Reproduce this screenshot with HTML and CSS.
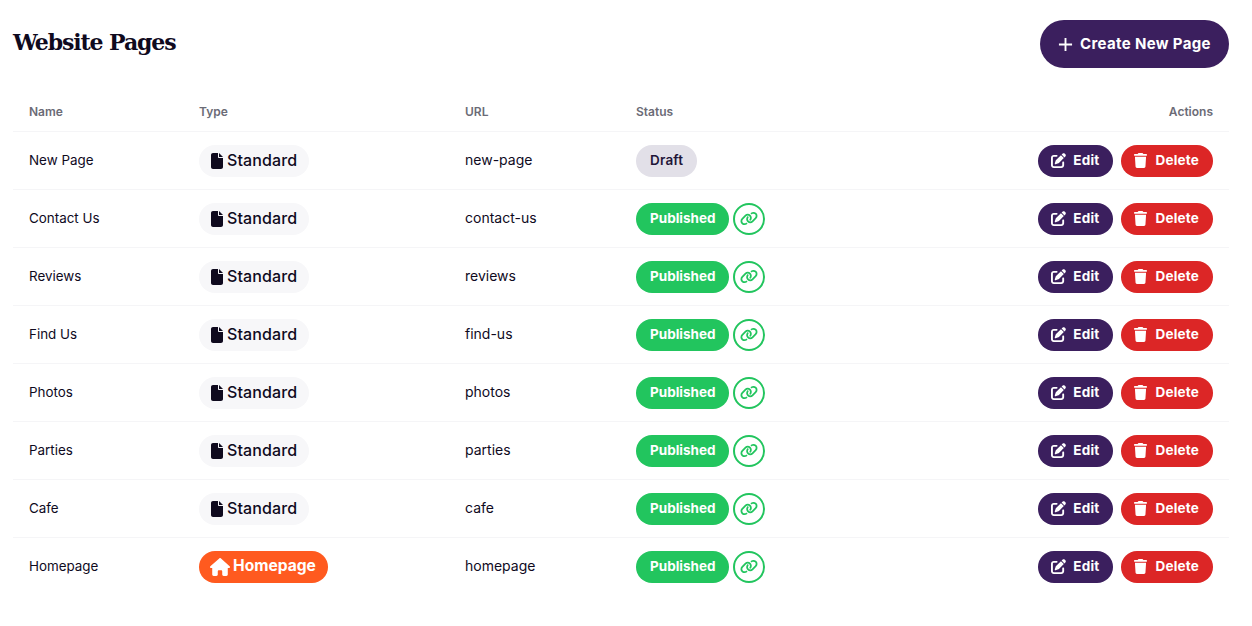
FILE: index.html
```html
<!DOCTYPE html>
<html lang="en">

<head>
    <meta charset="UTF-8">
    <meta name="viewport" content="width=device-width, initial-scale=1.0">
    <title>Website Pages</title>
    <link rel="stylesheet" href="styles.css">
</head>

<body>
    <svg class="sprite" xmlns="http://www.w3.org/2000/svg">
        <symbol id="i-file" viewBox="0 0 384 512"><path d="M0 64C0 28.7 28.7 0 64 0H224V128c0 17.7 14.3 32 32 32H384V448c0 35.3-28.7 64-64 64H64c-35.3 0-64-28.7-64-64V64zm384 64H256V0L384 128z"/></symbol>
        <symbol id="i-house" viewBox="0 0 576 512"><path d="M575.8 255.5c0 18-15 32.1-32 32.1h-32l.7 160.2c0 2.7-.2 5.4-.5 8.1V472c0 22.1-17.9 40-40 40H456c-1.1 0-2.2 0-3.3-.1c-1.4 .1-2.8 .1-4.2 .1H416 392c-22.1 0-40-17.9-40-40V448 384c0-17.7-14.3-32-32-32H256c-17.7 0-32 14.3-32 32v64 24c0 22.1-17.9 40-40 40H160 128.1c-1.5 0-3-.1-4.5-.2c-1.2 .1-2.4 .2-3.6 .2H104c-22.1 0-40-17.9-40-40V360c0-.9 0-1.9 .1-2.8V287.6H32c-18 0-32-14-32-32.1c0-9 3-17 10-24L266.4 8c7-7 15-8 22-8s15 2 21 7L564.8 231.5c8 7 12 15 11 24z"/></symbol>
        <symbol id="i-trash" viewBox="0 0 448 512"><path d="M135.2 17.7L128 32H32C14.3 32 0 46.3 0 64S14.3 96 32 96H416c17.7 0 32-14.3 32-32s-14.3-32-32-32H320l-7.2-14.3C307.4 6.8 296.3 0 284.2 0H163.8c-12.1 0-23.2 6.8-28.6 17.7zM416 128H32L53.2 467c1.6 25.3 22.6 45 47.9 45H346.9c25.3 0 46.3-19.7 47.9-45L416 128z"/></symbol>
        <symbol id="i-edit" viewBox="0 0 512 512"><path d="M471.6 21.7c-21.9-21.9-57.3-21.9-79.2 0L362.3 51.7l97.9 97.9 30.1-30.1c21.9-21.9 21.9-57.3 0-79.2L471.6 21.7zm-299.2 220c-6.1 6.1-10.8 13.6-13.5 21.9l-29.6 88.8c-2.9 8.6-.6 18.1 5.8 24.6s15.9 8.7 24.6 5.8l88.8-29.6c8.2-2.7 15.7-7.4 21.9-13.5L437.7 172.3 339.7 74.3 172.4 241.7zM96 64C43 64 0 107 0 160V416c0 53 43 96 96 96H352c53 0 96-43 96-96V320c0-17.7-14.3-32-32-32s-32 14.3-32 32v96c0 17.7-14.3 32-32 32H96c-17.7 0-32-14.3-32-32V160c0-17.7 14.3-32 32-32h96c17.7 0 32-14.3 32-32s-14.3-32-32-32H96z"/></symbol>
        <symbol id="i-link" viewBox="0 0 640 512"><path d="M579.8 267.7c56.5-56.5 56.5-148 0-204.5c-50-50-128.8-56.5-186.3-15.4l-1.6 1.1c-14.4 10.3-17.7 30.3-7.4 44.6s30.3 17.7 44.6 7.4l1.6-1.1c32.1-22.9 76-19.3 103.8 8.6c31.5 31.5 31.5 82.5 0 114L422.3 334.8c-31.5 31.5-82.5 31.5-114 0c-27.9-27.9-31.5-71.8-8.6-103.8l1.1-1.6c10.3-14.4 6.9-34.4-7.4-44.6s-34.4-6.9-44.6 7.4l-1.1 1.6C206.5 251.2 213 330 263 380c56.5 56.5 148 56.5 204.5 0L579.8 267.7zM60.2 244.3c-56.5 56.5-56.5 148 0 204.5c50 50 128.8 56.5 186.3 15.4l1.6-1.1c14.4-10.3 17.7-30.3 7.4-44.6s-30.3-17.7-44.6-7.4l-1.6 1.1c-32.1 22.9-76 19.3-103.8-8.6C74 372 74 321 105.5 289.5L217.7 177.2c31.5-31.5 82.5-31.5 114 0c27.9 27.9 31.5 71.8 8.6 103.9l-1.1 1.6c-10.3 14.4-6.9 34.4 7.4 44.6s34.4 6.9 44.6-7.4l1.1-1.6C433.5 260.8 427 182 377 132c-56.5-56.5-148-56.5-204.5 0L60.2 244.3z"/></symbol>
    </svg>

    <div class="main">
        <div class="header">
            <h1 class="title">Website Pages</h1>
            <a class="btn-create" href="#">
                <svg class="plus" viewBox="0 0 16 16"><path d="M8 1v14M1 8h14"/></svg>
                <span>Create New Page</span>
            </a>
        </div>

        <table class="pages">
            <thead>
                <tr>
                    <th class="col-name">Name</th>
                    <th class="col-type">Type</th>
                    <th class="col-url">URL</th>
                    <th class="col-status">Status</th>
                    <th class="col-actions">Actions</th>
                </tr>
            </thead>
            <tbody>
                <tr>
                    <td class="name">New Page</td>
                    <td><span class="type"><svg class="ic-file"><use href="#i-file"/></svg>Standard</span></td>
                    <td class="url">new-page</td>
                    <td><div class="status"><span class="badge draft">Draft</span></div></td>
                    <td><div class="actions"><a class="btn edit" href="#"><svg class="ic-edit"><use href="#i-edit"/></svg>Edit</a><a class="btn delete" href="#"><svg class="ic-trash"><use href="#i-trash"/></svg>Delete</a></div></td>
                </tr>
                <tr>
                    <td class="name">Contact Us</td>
                    <td><span class="type"><svg class="ic-file"><use href="#i-file"/></svg>Standard</span></td>
                    <td class="url">contact-us</td>
                    <td><div class="status"><span class="badge published">Published</span><a class="open" href="#"><svg class="ic-link"><use href="#i-link"/></svg></a></div></td>
                    <td><div class="actions"><a class="btn edit" href="#"><svg class="ic-edit"><use href="#i-edit"/></svg>Edit</a><a class="btn delete" href="#"><svg class="ic-trash"><use href="#i-trash"/></svg>Delete</a></div></td>
                </tr>
                <tr>
                    <td class="name">Reviews</td>
                    <td><span class="type"><svg class="ic-file"><use href="#i-file"/></svg>Standard</span></td>
                    <td class="url">reviews</td>
                    <td><div class="status"><span class="badge published">Published</span><a class="open" href="#"><svg class="ic-link"><use href="#i-link"/></svg></a></div></td>
                    <td><div class="actions"><a class="btn edit" href="#"><svg class="ic-edit"><use href="#i-edit"/></svg>Edit</a><a class="btn delete" href="#"><svg class="ic-trash"><use href="#i-trash"/></svg>Delete</a></div></td>
                </tr>
                <tr>
                    <td class="name">Find Us</td>
                    <td><span class="type"><svg class="ic-file"><use href="#i-file"/></svg>Standard</span></td>
                    <td class="url">find-us</td>
                    <td><div class="status"><span class="badge published">Published</span><a class="open" href="#"><svg class="ic-link"><use href="#i-link"/></svg></a></div></td>
                    <td><div class="actions"><a class="btn edit" href="#"><svg class="ic-edit"><use href="#i-edit"/></svg>Edit</a><a class="btn delete" href="#"><svg class="ic-trash"><use href="#i-trash"/></svg>Delete</a></div></td>
                </tr>
                <tr>
                    <td class="name">Photos</td>
                    <td><span class="type"><svg class="ic-file"><use href="#i-file"/></svg>Standard</span></td>
                    <td class="url">photos</td>
                    <td><div class="status"><span class="badge published">Published</span><a class="open" href="#"><svg class="ic-link"><use href="#i-link"/></svg></a></div></td>
                    <td><div class="actions"><a class="btn edit" href="#"><svg class="ic-edit"><use href="#i-edit"/></svg>Edit</a><a class="btn delete" href="#"><svg class="ic-trash"><use href="#i-trash"/></svg>Delete</a></div></td>
                </tr>
                <tr>
                    <td class="name">Parties</td>
                    <td><span class="type"><svg class="ic-file"><use href="#i-file"/></svg>Standard</span></td>
                    <td class="url">parties</td>
                    <td><div class="status"><span class="badge published">Published</span><a class="open" href="#"><svg class="ic-link"><use href="#i-link"/></svg></a></div></td>
                    <td><div class="actions"><a class="btn edit" href="#"><svg class="ic-edit"><use href="#i-edit"/></svg>Edit</a><a class="btn delete" href="#"><svg class="ic-trash"><use href="#i-trash"/></svg>Delete</a></div></td>
                </tr>
                <tr>
                    <td class="name">Cafe</td>
                    <td><span class="type"><svg class="ic-file"><use href="#i-file"/></svg>Standard</span></td>
                    <td class="url">cafe</td>
                    <td><div class="status"><span class="badge published">Published</span><a class="open" href="#"><svg class="ic-link"><use href="#i-link"/></svg></a></div></td>
                    <td><div class="actions"><a class="btn edit" href="#"><svg class="ic-edit"><use href="#i-edit"/></svg>Edit</a><a class="btn delete" href="#"><svg class="ic-trash"><use href="#i-trash"/></svg>Delete</a></div></td>
                </tr>
                <tr>
                    <td class="name">Homepage</td>
                    <td><span class="type home"><svg class="ic-house"><use href="#i-house"/></svg>Homepage</span></td>
                    <td class="url">homepage</td>
                    <td><div class="status"><span class="badge published">Published</span><a class="open" href="#"><svg class="ic-link"><use href="#i-link"/></svg></a></div></td>
                    <td><div class="actions"><a class="btn edit" href="#"><svg class="ic-edit"><use href="#i-edit"/></svg>Edit</a><a class="btn delete" href="#"><svg class="ic-trash"><use href="#i-trash"/></svg>Delete</a></div></td>
                </tr>
            </tbody>
        </table>
    </div>
</body>

</html>
```

FILE: styles.css
```css
body {
    font-family: Inter, "Noto Sans", sans-serif;
    background-color: #fff;
    color: #0f0a1e;
    margin: 0;
}

a {
    text-decoration: none;
}

.sprite {
    display: none;
}

.main {
    padding: 20px 23px 0 13px;
}

.header {
    display: flex;
    justify-content: space-between;
    align-items: flex-start;
    margin-bottom: 24px;
}

.title {
    margin: 5px 0 0;
    font-family: "DejaVu Serif", serif;
    font-size: 22px;
    font-weight: 700;
    line-height: 34px;
    letter-spacing: -1.1px;
}

.btn-create {
    display: flex;
    align-items: center;
    gap: 7px;
    height: 48px;
    width: 189px;
    box-sizing: border-box;
    padding: 0 0 2px 18px;
    border-radius: 24px;
    background-color: #3b1f5e;
    color: #fff;
    font-size: 15px;
    font-weight: 700;
    letter-spacing: 0.35px;
}

.plus {
    width: 15px;
    height: 15px;
    margin-top: 2px;
    fill: none;
    stroke: #fff;
    stroke-width: 2;
}

.pages {
    width: 100%;
    border-collapse: collapse;
    table-layout: fixed;
    font-size: 14px;
}

.pages th {
    height: 38px;
    padding: 0 16px 1px;
    font-size: 12px;
    font-weight: 600;
    color: #6b6b76;
    text-align: left;
    border-bottom: 1px solid #f5f5f7;
}

.pages td {
    height: 57px;
    padding: 0 16px;
    border-bottom: 1px solid #f5f5f7;
}

.pages td.name {
    height: 55px;
    padding-bottom: 2px;
    font-size: 13.4px;
}

.pages td.url {
    height: 55px;
    padding-bottom: 2px;
}

.pages tbody tr:last-child td {
    border-bottom: none;
}

.col-name {
    width: 138px;
}

.col-type {
    width: 234px;
}

.col-url {
    width: 139px;
}

.col-status {
    width: 250px;
}

.pages .col-actions {
    text-align: right;
}

.type {
    display: inline-flex;
    align-items: center;
    gap: 4px;
    height: 32px;
    box-sizing: border-box;
    padding: 0 12px 2px;
    border-radius: 16px;
    background-color: #f7f7f9;
    font-size: 16px;
    font-weight: 500;
    letter-spacing: 0.1px;
    vertical-align: middle;
}

.type.home {
    gap: 3px;
    padding: 0 12px 2px 11px;
    background-color: #ff5a1f;
    color: #fff;
    font-size: 15.6px;
    font-weight: 700;
    letter-spacing: 0;
}

.ic-file {
    width: 12px;
    height: 16px;
    margin-top: 2px;
    fill: #0f0a1e;
}

.ic-house {
    width: 20px;
    height: 18px;
    margin-top: 2px;
    fill: #fff;
}

.status {
    display: flex;
    align-items: center;
    gap: 4px;
}

.badge {
    display: flex;
    align-items: center;
    height: 32px;
    padding: 0 14px 1px;
    box-sizing: border-box;
    border-radius: 16px;
    font-size: 13.5px;
    font-weight: 600;
}

.badge.draft {
    background-color: #e2e0e8;
    color: #1f1638;
    letter-spacing: 0.2px;
}

.badge.published {
    padding-right: 13px;
    background-color: #22c55e;
    color: #fff;
    font-weight: 700;
}

.open {
    display: flex;
    align-items: center;
    justify-content: center;
    width: 32px;
    height: 32px;
    box-sizing: border-box;
    border: 2px solid #22c55e;
    border-radius: 50%;
}

.ic-link {
    width: 18px;
    height: 15px;
    fill: #22c55e;
}

.actions {
    display: flex;
    justify-content: flex-end;
    gap: 8px;
}

.btn {
    display: flex;
    align-items: center;
    height: 32px;
    box-sizing: border-box;
    padding: 0 14px 2px 13px;
    border-radius: 16px;
    color: #fff;
    font-size: 13.5px;
    font-weight: 700;
    letter-spacing: 0.2px;
}

.btn.edit {
    gap: 7px;
    background-color: #3b1f5e;
}

.btn.delete {
    gap: 8px;
    background-color: #dc2626;
}

.ic-edit {
    width: 15px;
    height: 15px;
    margin-top: 2px;
    fill: #fff;
}

.ic-trash {
    width: 13px;
    height: 15px;
    margin-top: 2px;
    fill: #fff;
}
```
